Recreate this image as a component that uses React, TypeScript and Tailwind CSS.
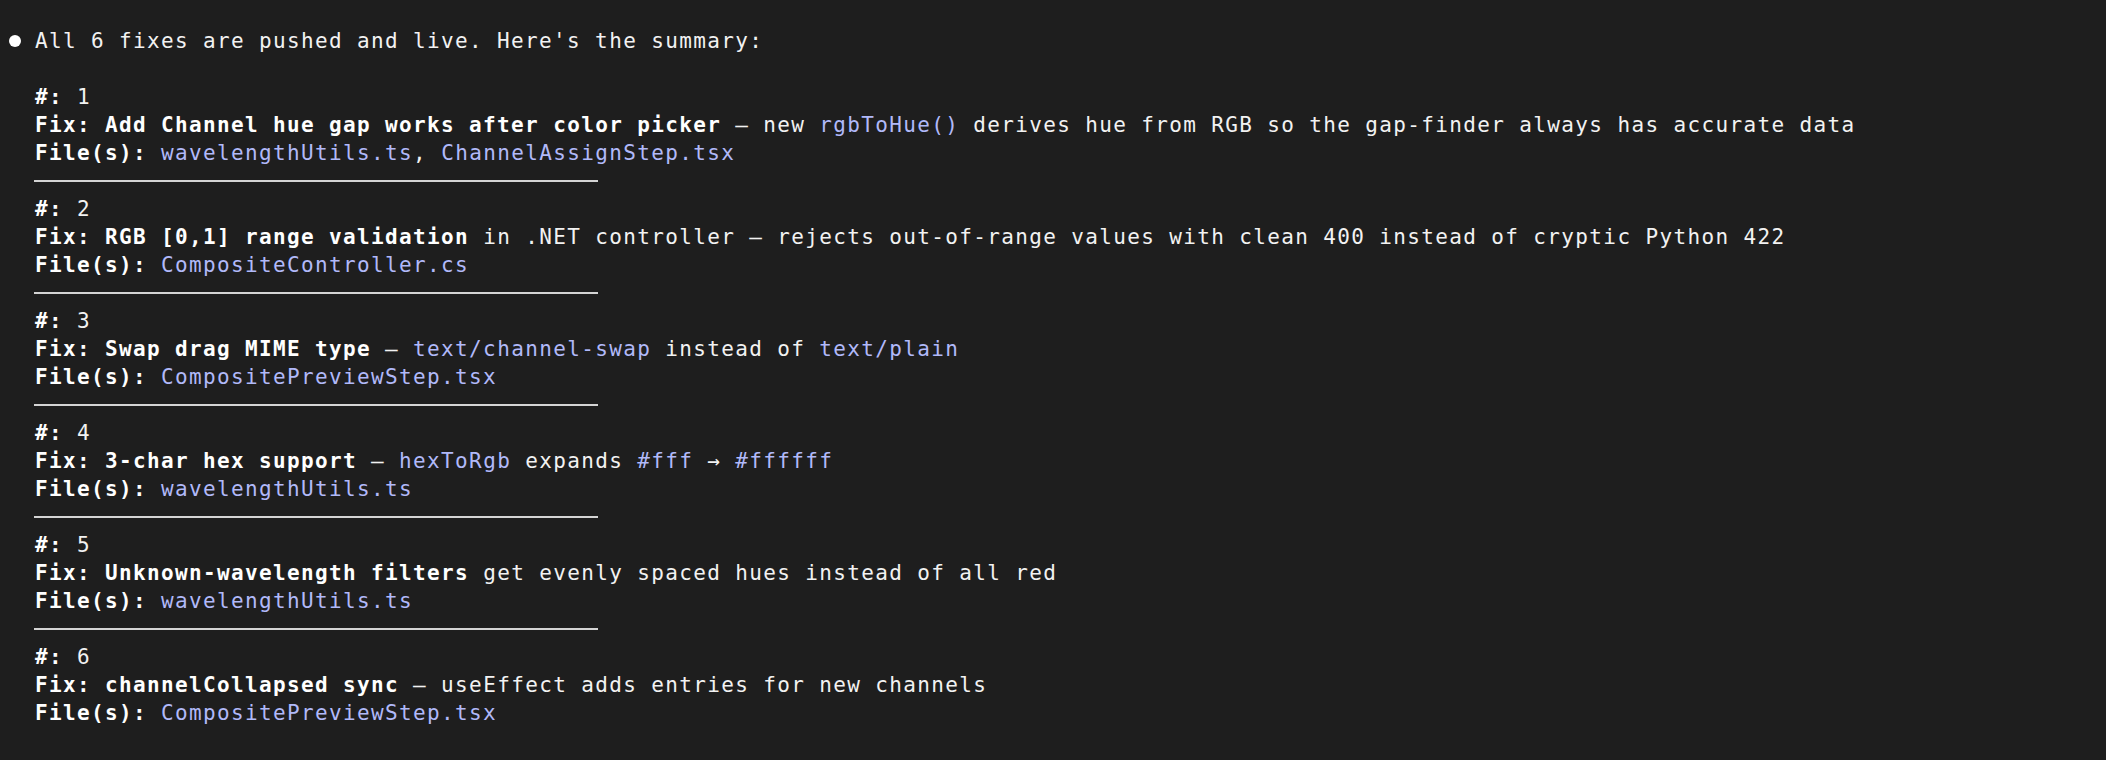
import React from 'react';

type Seg = { t: string; k?: 'b' | 'c' };

type FixItem = {
  n: number;
  fix: Seg[];
  files: Seg[];
};

const fixes: FixItem[] = [
  {
    n: 1,
    fix: [
      { t: 'Add Channel hue gap works after color picker', k: 'b' },
      { t: ' — new ' },
      { t: 'rgbToHue()', k: 'c' },
      { t: ' derives hue from RGB so the gap-finder always has accurate data' },
    ],
    files: [
      { t: 'wavelengthUtils.ts', k: 'c' },
      { t: ', ' },
      { t: 'ChannelAssignStep.tsx', k: 'c' },
    ],
  },
  {
    n: 2,
    fix: [
      { t: 'RGB [0,1] range validation', k: 'b' },
      { t: ' in .NET controller — rejects out-of-range values with clean 400 instead of cryptic Python 422' },
    ],
    files: [{ t: 'CompositeController.cs', k: 'c' }],
  },
  {
    n: 3,
    fix: [
      { t: 'Swap drag MIME type', k: 'b' },
      { t: ' — ' },
      { t: 'text/channel-swap', k: 'c' },
      { t: ' instead of ' },
      { t: 'text/plain', k: 'c' },
    ],
    files: [{ t: 'CompositePreviewStep.tsx', k: 'c' }],
  },
  {
    n: 4,
    fix: [
      { t: '3-char hex support', k: 'b' },
      { t: ' — ' },
      { t: 'hexToRgb', k: 'c' },
      { t: ' expands ' },
      { t: '#fff', k: 'c' },
      { t: ' → ' },
      { t: '#ffffff', k: 'c' },
    ],
    files: [{ t: 'wavelengthUtils.ts', k: 'c' }],
  },
  {
    n: 5,
    fix: [
      { t: 'Unknown-wavelength filters', k: 'b' },
      { t: ' get evenly spaced hues instead of all red' },
    ],
    files: [{ t: 'wavelengthUtils.ts', k: 'c' }],
  },
  {
    n: 6,
    fix: [
      { t: 'channelCollapsed sync', k: 'b' },
      { t: ' — useEffect adds entries for new channels' },
    ],
    files: [{ t: 'CompositePreviewStep.tsx', k: 'c' }],
  },
];

const Segs: React.FC<{ segs: Seg[] }> = ({ segs }) => (
  <>
    {segs.map((s, i) => (
      <span
        key={i}
        className={
          s.k === 'b' ? 'font-bold text-white' : s.k === 'c' ? 'text-[#b1b9f9]' : 'text-[#f2f2f2]'
        }
      >
        {s.t}
      </span>
    ))}
  </>
);

const Line: React.FC<{ children?: React.ReactNode }> = ({ children }) => (
  <div className="h-[28px] leading-[28px] pl-[28px] whitespace-pre">{children}</div>
);

const Divider: React.FC = () => (
  <div className="h-[28px] pl-[27px] flex items-center">
    <div className="w-[564px] h-[2px] bg-[#d4d4d4]" />
  </div>
);

export default function App() {
  return (
    <div
      className="min-h-screen w-full bg-[#1e1e1e] text-[#f2f2f2] pt-[27px] pl-[7px] text-[21px] tracking-[1.36px] overflow-hidden"
      style={{ fontFamily: '"DejaVu Sans Mono", "Liberation Mono", monospace' }}
    >
      <div className="h-[28px] leading-[28px] whitespace-pre flex items-center">
        <span className="w-[28px] flex items-center">
          <span className="ml-[2px] w-[12px] h-[12px] rounded-full bg-white" />
        </span>
        <span>All 6 fixes are pushed and live. Here's the summary:</span>
      </div>
      <Line />
      {fixes.map((f, i) => (
        <React.Fragment key={f.n}>
          <Line>
            <span className="font-bold text-white">#:</span> {f.n}
          </Line>
          <Line>
            <span className="font-bold text-white">Fix:</span> <Segs segs={f.fix} />
          </Line>
          <Line>
            <span className="font-bold text-white">File(s):</span> <Segs segs={f.files} />
          </Line>
          {i < fixes.length - 1 && <Divider />}
        </React.Fragment>
      ))}
      <Line />
      <Line>
        <span className="text-[#8a8a8a]">✻ Worked for 4m 12s, then checked the builds</span>
      </Line>
    </div>
  );
}
